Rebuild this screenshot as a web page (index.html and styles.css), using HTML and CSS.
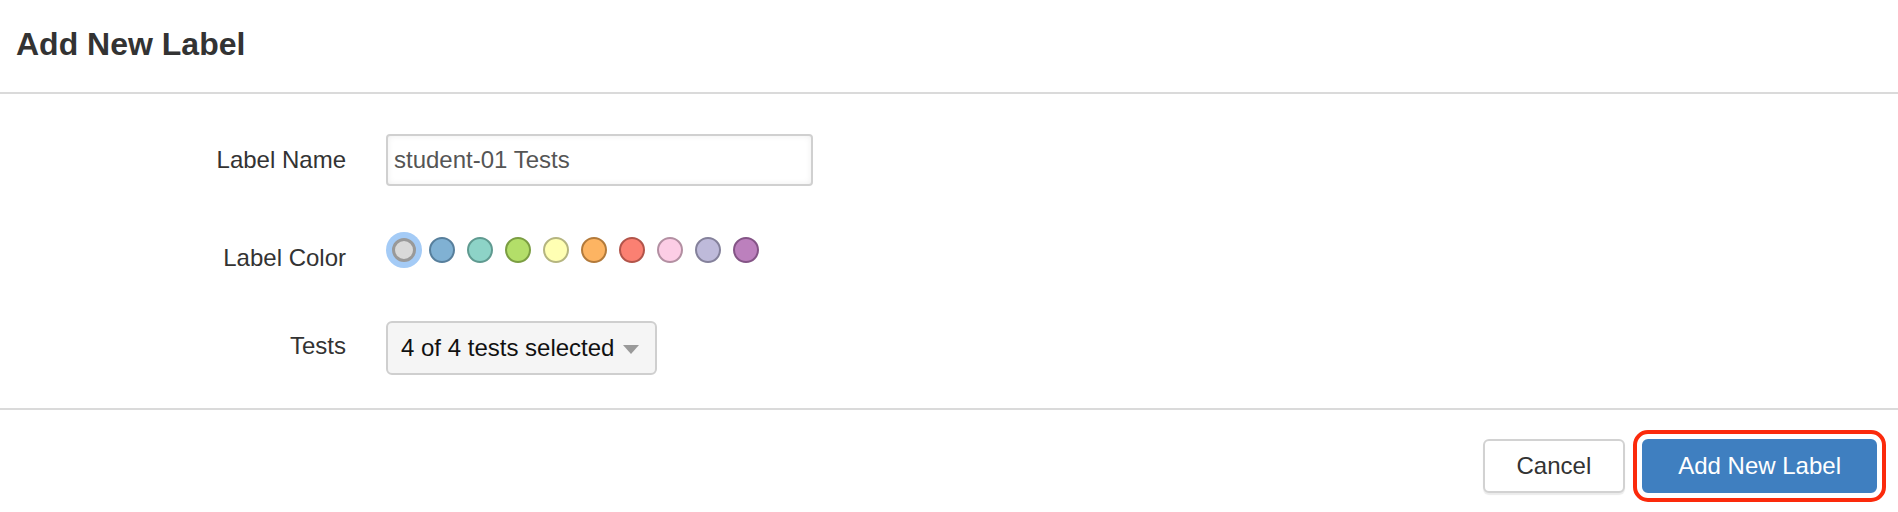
FILE: index.html
```html
<!DOCTYPE html>
<html lang="en">
<head>
<meta charset="utf-8">
<title>Add New Label</title>
<link rel="stylesheet" href="styles.css">
</head>
<body>
<div class="modal">
  <header class="modal-header">
    <h1 class="modal-title">Add New Label</h1>
  </header>
  <div class="modal-body">
    <div class="form-row row-name">
      <label class="form-label" for="label-name">Label Name</label>
      <input id="label-name" class="text-input" type="text" value="student-01 Tests">
    </div>
    <div class="form-row row-color">
      <span class="form-label">Label Color</span>
      <div class="swatches">
        <span class="swatch swatch-selected sw-gray"></span>
        <span class="swatch sw-blue"></span>
        <span class="swatch sw-teal"></span>
        <span class="swatch sw-green"></span>
        <span class="swatch sw-yellow"></span>
        <span class="swatch sw-orange"></span>
        <span class="swatch sw-red"></span>
        <span class="swatch sw-pink"></span>
        <span class="swatch sw-lavender"></span>
        <span class="swatch sw-purple"></span>
      </div>
    </div>
    <div class="form-row row-tests">
      <span class="form-label">Tests</span>
      <button class="select-btn" type="button">4 of 4 tests selected<span class="caret"></span></button>
    </div>
  </div>
  <footer class="modal-footer">
    <button class="btn btn-default" type="button">Cancel</button>
    <button class="btn btn-primary btn-highlight" type="button">Add New Label</button>
  </footer>
</div>
</body>
</html>
```
FILE: styles.css
```css
* { box-sizing: border-box; }

html, body {
  margin: 0;
  padding: 0;
  background: #fff;
}

body {
  font-family: "Liberation Sans", Arial, Helvetica, sans-serif;
  color: #333;
}

.modal-header {
  padding: 26px 16px 30px;
  border-bottom: 2px solid #dadada;
}

.modal-title {
  margin: 0;
  font-size: 32px;
  line-height: 36px;
  font-weight: bold;
  color: #333;
}

.modal-body {
  padding: 40px 0 33px;
}

.form-row {
  display: grid;
  grid-template-columns: 346px auto;
  column-gap: 40px;
  align-items: start;
  justify-items: start;
}

.form-label {
  justify-self: end;
  text-align: right;
  font-size: 24px;
  color: #333;
}

.row-name { margin-bottom: 46px; }
.row-name .form-label { line-height: 52px; }

.row-color { margin-bottom: 37px; }
.row-color .form-label { line-height: 52px; }

.row-tests .form-label { line-height: 50px; }

.text-input {
  width: 427px;
  height: 52px;
  padding: 0 6px;
  border: 2px solid #d0d0d0;
  border-radius: 4px;
  box-shadow: inset 0 0 6px rgba(0, 0, 0, 0.07);
  font-family: inherit;
  font-size: 24px;
  color: #555;
  background: #fff;
}

.swatches {
  display: flex;
  align-items: center;
  gap: 12px;
  padding-top: 5px;
}

.swatch {
  display: block;
  width: 26px;
  height: 26px;
  border-radius: 50%;
  border: 2px solid;
}

.swatch-selected {
  width: 24px;
  height: 24px;
  margin-left: 6px;
  margin-right: 1px;
  border-width: 3px;
  box-shadow: 0 0 0 6px #a4cbf6;
}

.sw-gray { background: #d9d9d9; border-color: #999; }
.sw-blue { background: #80b1d3; border-color: #577f9c; }
.sw-teal { background: #8dd3c7; border-color: #5f9a90; }
.sw-green { background: #b3de69; border-color: #7b9e42; }
.sw-yellow { background: #ffffb3; border-color: #b5b580; }
.sw-orange { background: #fdb462; border-color: #b37a3a; }
.sw-red { background: #fb8072; border-color: #b2544a; }
.sw-pink { background: #fccde5; border-color: #b38fa2; }
.sw-lavender { background: #bebada; border-color: #84819b; }
.sw-purple { background: #bc80bd; border-color: #845486; }

.select-btn {
  display: flex;
  align-items: center;
  height: 54px;
  padding: 0 16px 0 13px;
  border: 2px solid #cfcfcf;
  border-radius: 6px;
  background: #f5f5f5;
  font-family: inherit;
  font-size: 24px;
  color: #111;
}

.caret {
  display: block;
  width: 0;
  height: 0;
  margin-left: 9px;
  margin-top: 2px;
  border-left: 8.5px solid transparent;
  border-right: 8.5px solid transparent;
  border-top: 9px solid #9a9a9a;
}

.modal-footer {
  display: flex;
  justify-content: flex-end;
  gap: 17px;
  padding: 29px 21px 19px;
  border-top: 2px solid #dadada;
}

.btn {
  height: 54px;
  padding: 0 34px;
  border-radius: 6px;
  font-family: inherit;
  font-size: 24px;
  line-height: 1;
}

.btn-default {
  padding: 0 32px;
  background: #fff;
  color: #333;
  border: 2px solid #d2d2d2;
  box-shadow: 0 2px 1px rgba(0, 0, 0, 0.08);
}

.btn-primary {
  background: #3f7fc0;
  color: #fff;
  border: 2px solid #3f7fc0;
}

.btn-highlight {
  outline: 4px solid #fb2a0c;
  outline-offset: 5px;
}
```
